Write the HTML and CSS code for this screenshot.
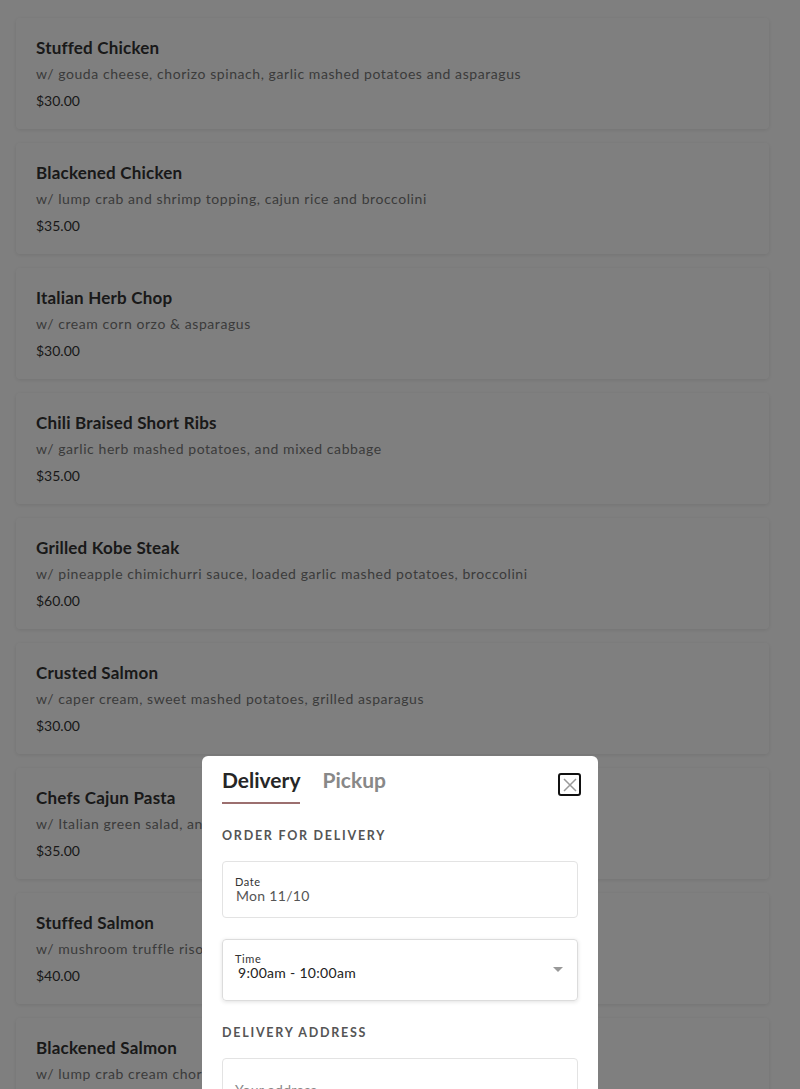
FILE: index.html
```html
<!DOCTYPE html>
<html lang="en">
<head>
<meta charset="utf-8">
<title>Menu</title>
<link rel="stylesheet" href="styles.css">
</head>
<body>
<main class="menu">
  <div class="item">
    <h3 class="item-name">Stuffed Chicken</h3>
    <p class="item-desc">w/ gouda cheese, chorizo spinach, garlic mashed potatoes and asparagus</p>
    <p class="item-price">$30.00</p>
  </div>
  <div class="item">
    <h3 class="item-name">Blackened Chicken</h3>
    <p class="item-desc">w/ lump crab and shrimp topping, cajun rice and broccolini</p>
    <p class="item-price">$35.00</p>
  </div>
  <div class="item">
    <h3 class="item-name">Italian Herb Chop</h3>
    <p class="item-desc">w/ cream corn orzo &amp; asparagus</p>
    <p class="item-price">$30.00</p>
  </div>
  <div class="item">
    <h3 class="item-name">Chili Braised Short Ribs</h3>
    <p class="item-desc">w/ garlic herb mashed potatoes, and mixed cabbage</p>
    <p class="item-price">$35.00</p>
  </div>
  <div class="item">
    <h3 class="item-name">Grilled Kobe Steak</h3>
    <p class="item-desc">w/ pineapple chimichurri sauce, loaded garlic mashed potatoes, broccolini</p>
    <p class="item-price">$60.00</p>
  </div>
  <div class="item">
    <h3 class="item-name">Crusted Salmon</h3>
    <p class="item-desc">w/ caper cream, sweet mashed potatoes, grilled asparagus</p>
    <p class="item-price">$30.00</p>
  </div>
  <div class="item">
    <h3 class="item-name">Chefs Cajun Pasta</h3>
    <p class="item-desc">w/ Italian green salad, and garlic bread</p>
    <p class="item-price">$35.00</p>
  </div>
  <div class="item">
    <h3 class="item-name">Stuffed Salmon</h3>
    <p class="item-desc">w/ mushroom truffle risotto and asparagus</p>
    <p class="item-price">$40.00</p>
  </div>
  <div class="item">
    <h3 class="item-name">Blackened Salmon</h3>
    <p class="item-desc">w/ lump crab cream chorizo sauce</p>
  </div>
</main>

<div class="overlay">
  <section class="modal">
    <div class="modal-head">
      <div class="tabs">
        <span class="tab active">Delivery</span>
        <span class="tab">Pickup</span>
      </div>
      <button class="close" aria-label="Close">
        <svg width="14" height="14" viewBox="0 0 14 14"><path d="M1 1L13 13M13 1L1 13" stroke="#9a9a9a" stroke-width="1.5" fill="none"/></svg>
      </button>
    </div>
    <h4 class="section-label">Order for delivery</h4>
    <div class="field">
      <span class="field-label">Date</span>
      <span class="field-value">Mon 11/10</span>
    </div>
    <div class="field select">
      <span class="field-label">Time</span>
      <span class="field-value dark">9:00am - 10:00am</span>
      <span class="caret"></span>
    </div>
    <h4 class="section-label">Delivery address</h4>
    <div class="field address">
      <span class="placeholder">Your address</span>
    </div>
  </section>
</div>
</body>
</html>
```
FILE: styles.css
```css
* { box-sizing: border-box; }
html, body { margin: 0; padding: 0; }
body {
  background: #ffffff;
  font-family: Lato, "Noto Sans", sans-serif;
  color: #333;
  overflow: hidden;
  height: 1089px;
}
.menu {
  display: flex;
  flex-direction: column;
  gap: 14px;
  padding: 18px 31px 0 16px;
}
.item {
  background: #fff;
  border-radius: 4px;
  box-shadow: 0 1px 4px rgba(0,0,0,0.10);
  padding: 20px 20px 19px;
  height: 111px;
}
.item-name {
  margin: 0;
  font-size: 17px;
  font-weight: 700;
  color: #333;
  letter-spacing: 0.2px;
  line-height: 20px;
}
.item-desc {
  margin: 7px 0 0;
  font-size: 14px;
  color: #777;
  letter-spacing: 0.57px;
  line-height: 18px;
}
.item-price {
  margin: 9px 0 0;
  font-size: 14px;
  color: #333;
  line-height: 18px;
}
.overlay {
  position: fixed;
  inset: 0;
  background: rgba(0,0,0,0.5);
  display: flex;
  justify-content: center;
  align-items: flex-start;
  padding-top: 756px;
}
.modal {
  width: 396px;
  background: #fff;
  border-radius: 6px 6px 0 0;
  padding: 10px 20px 40px;
  min-height: 400px;
}
.modal-head {
  display: flex;
  justify-content: space-between;
  align-items: flex-start;
}
.tabs {
  display: flex;
  gap: 22px;
}
.tab {
  font-size: 21px;
  font-weight: 700;
  color: #888;
  line-height: 28px;
  padding-bottom: 8px;
  border-bottom: 2px solid transparent;
  letter-spacing: 0;
}
.tab.active {
  color: #262626;
  border-bottom-color: #9c6f6f;
}
.close {
  margin: 7px -3px 0 0;
  width: 23px;
  height: 23px;
  border: 2px solid #111;
  border-radius: 3px;
  background: #fff;
  padding: 0;
  display: flex;
  align-items: center;
  justify-content: center;
}
.section-label {
  margin: 24px 0 17px;
  font-size: 12.5px;
  font-weight: 700;
  text-transform: uppercase;
  letter-spacing: 1.75px;
  color: #555;
  line-height: 16px;
}
.field {
  position: relative;
  border: 1px solid #e3e3e3;
  border-radius: 4px;
  height: 57px;
  padding: 14px 12px 0;
  display: flex;
  flex-direction: column;
}
.field + .field { margin-top: 21px; }
.field.select {
  height: 62px;
  padding-top: 13px;
  border-color: #dcdcdc;
  box-shadow: 0 1px 4px rgba(0,0,0,0.12);
}
.field-label {
  font-size: 11px;
  color: #333;
  letter-spacing: 0.6px;
  line-height: 12px;
}
.field-value {
  font-size: 14px;
  color: #555;
  line-height: 16px;
  padding-left: 1px;
  letter-spacing: 0.3px;
}
.field-value.dark { color: #222; padding-left: 3px; }
.caret {
  position: absolute;
  right: 14px;
  top: 27px;
  width: 0;
  height: 0;
  border-left: 5px solid transparent;
  border-right: 5px solid transparent;
  border-top: 5px solid #999;
}
.field.address {
  height: 70px;
  padding-top: 22px;
}
.placeholder {
  font-size: 14px;
  color: #888;
  letter-spacing: 0.3px;
}
```
